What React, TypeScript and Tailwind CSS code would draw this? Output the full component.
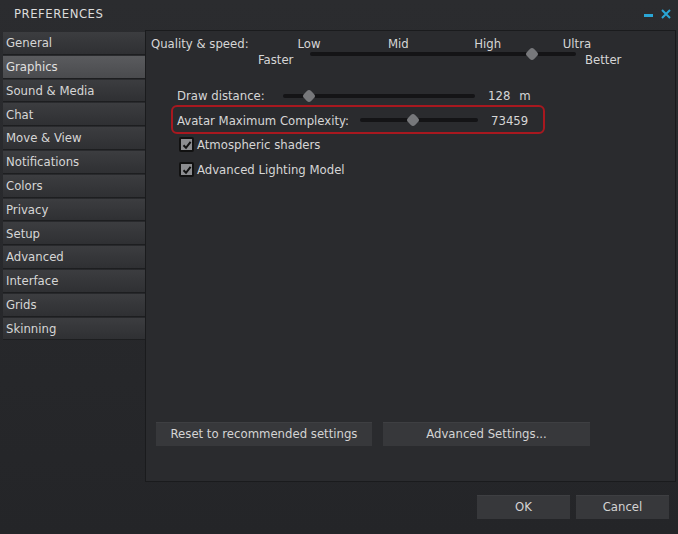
import React from "react";

const TABS = [
  "General",
  "Graphics",
  "Sound & Media",
  "Chat",
  "Move & View",
  "Notifications",
  "Colors",
  "Privacy",
  "Setup",
  "Advanced",
  "Interface",
  "Grids",
  "Skinning",
];

const FONT = {
  fontFamily: '"DejaVu Sans Condensed", "DejaVu Sans", sans-serif',
};

function Track({ width, thumb }: { width: number; thumb: number }) {
  return (
    <div className="relative h-[12px] shrink-0" style={{ width }}>
      <div className="absolute left-0 right-0 top-[4px] h-[4px] rounded-full bg-[#141416]" />
      <div
        className="absolute top-[1px] h-[10px] w-[10px] rotate-45 rounded-[3px] bg-[#77787b]"
        style={{ left: thumb - 5 }}
      />
    </div>
  );
}

function Check({ label }: { label: string }) {
  return (
    <div className="flex items-center h-[25px]">
      <div className="ml-[33px] flex h-[15px] w-[15px] items-center justify-center rounded-[2px] border-2 border-[#111] bg-[#8c8d90]">
        <svg width="10" height="10" viewBox="0 0 10 10">
          <path d="M1.5 5.2 L4 7.8 L8.6 1.8" fill="none" stroke="#111" strokeWidth="2" />
        </svg>
      </div>
      <span className="ml-[3px]">{label}</span>
    </div>
  );
}

function Btn({ children, w }: { children: React.ReactNode; w: string }) {
  return (
    <button
      className={`${w} h-[24px] bg-[#37383b] text-[#d4d4d4] shadow-[inset_0_1px_0_rgba(255,255,255,0.04)]`}
    >
      {children}
    </button>
  );
}

export default function App() {
  return (
    <div
      className="w-[678px] h-[534px] overflow-hidden bg-gradient-to-b from-[#2b2c2f] to-[#242528] text-[13px] text-[#d6d6d6]"
      style={FONT}
    >
      {/* Title */}
      <div className="flex h-[30px] items-center justify-between pl-[14px] pr-[7px] pb-[3px]">
        <span className="tracking-[0.5px] text-[#dcdcdc]">PREFERENCES</span>
        <div className="flex items-center gap-[8px]">
          <div className="mt-[4px] h-[3px] w-[9px] bg-[#2aa6d6]" />
          <svg width="10" height="10" viewBox="0 0 10 10">
            <path d="M1 1 L9 9 M9 1 L1 9" stroke="#2aa6d6" strokeWidth="2" />
          </svg>
        </div>
      </div>

      <div className="flex h-[452px]">
        {/* Tabs */}
        <div className="flex w-[145px] flex-col gap-[1px] pl-[3px] pt-[2px]">
          {TABS.map((t) => (
            <div
              key={t}
              className={`flex h-[22.8px] items-center border-b border-[#1d1e20] pl-[3px] ${
                t === "Graphics"
                  ? "bg-gradient-to-b from-[#5a5b5e] to-[#4a4b4e] text-[#e0e0e0]"
                  : "bg-gradient-to-b from-[#3c3d40] to-[#2f3033]"
              }`}
            >
              {t}
            </div>
          ))}
        </div>

        {/* Panel */}
        <div className="mr-[2px] flex flex-1 flex-col border border-[#1a1b1d] bg-[#2a2b2e]">
          {/* Quality & speed */}
          <div className="flex h-[22px] items-end">
            <span className="w-[143px] pl-[5px]">Quality &amp; speed:</span>
            <div className="flex w-[308px] justify-between">
              {["Low", "Mid", "High", "Ultra"].map((l) => (
                <span key={l} className="w-[40px] text-center">
                  {l}
                </span>
              ))}
            </div>
          </div>
          <div className="flex h-[16px] items-start">
            <span className="ml-[112px] w-[52px] leading-[14px]">Faster</span>
            <div className="-mt-[5px]">
              <Track width={266} thumb={222} />
            </div>
            <span className="ml-[9px] leading-[14px]">Better</span>
          </div>

          {/* Draw distance */}
          <div className="mt-[18px] flex h-[18px] items-center">
            <span className="ml-[31px] w-[106px]">Draw distance:</span>
            <Track width={192} thumb={26} />
            <span className="ml-[13px]">128</span>
            <span className="ml-[9px]">m</span>
          </div>

          {/* Avatar complexity */}
          <div className="ml-[25px] flex h-[29px] w-[374px] items-center rounded-[6px] border-2 border-[#a8181f] pt-[3px]">
            <span className="ml-[4px] w-[183px]">Avatar Maximum Complexity:</span>
            <div className="-mt-[3px]">
              <Track width={118} thumb={53} />
            </div>
            <span className="ml-[13px]">73459</span>
          </div>

          <div className="-mt-[2px]">
            <Check label="Atmospheric shaders" />
            <Check label="Advanced Lighting Model" />
          </div>

          <div className="ml-[10px] mt-auto mb-[35px] flex gap-[11px]">
            <Btn w="w-[216px]">Reset to recommended settings</Btn>
            <Btn w="w-[207px]">Advanced Settings...</Btn>
          </div>
        </div>
      </div>

      {/* Footer */}
      <div className="mt-[13px] flex justify-end gap-[6px] pr-[9px]">
        <Btn w="w-[93px]">OK</Btn>
        <Btn w="w-[93px]">Cancel</Btn>
      </div>
    </div>
  );
}
